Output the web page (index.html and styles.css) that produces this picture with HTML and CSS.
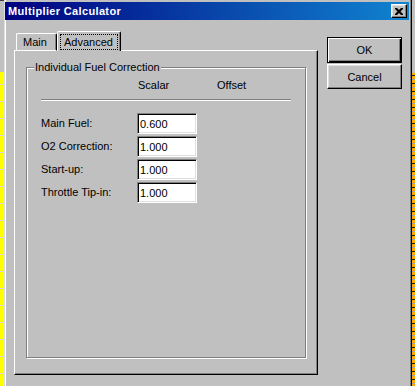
FILE: index.html
```html
<!DOCTYPE html>
<html lang="en">
<head>
  <meta charset="UTF-8" />
  <title>Multiplier Calculator</title>
  <link rel="stylesheet" href="styles.css">
</head>
<body>
  <div class="desktop">
    <div class="stripLeft"></div>

    <div class="window">
      <div class="titleBar">
        <span class="titleText">Multiplier Calculator</span>
        <button type="button" class="closeBtn" aria-label="Close">
          <svg width="8" height="7" viewBox="0 0 8 7">
            <path d="M0 0h2l2 2 2-2h2v1l-2.5 2.5 2.5 2.5v1h-2l-2-2-2 2h-2v-1l2.5-2.5-2.5-2.5z" fill="#000"/>
          </svg>
        </button>
      </div>

      <div class="windowBody">
        <div class="tabArea">
          <div class="tabStrip">
            <div class="tab">Main</div>
            <div class="tab selected"><span class="focusText">Advanced</span></div>
          </div>

          <div class="tabPanel">
            <fieldset class="groupBox">
              <legend>Individual Fuel Correction</legend>

              <div class="headerRow">
                <span class="colHead">Scalar</span>
                <span class="colHead">Offset</span>
              </div>
              <div class="separator"></div>

              <div class="rows">
                <label for="mainFuel">Main Fuel:</label>
                <input type="text" id="mainFuel" value="0.600">

                <label for="o2">O2 Correction:</label>
                <input type="text" id="o2" value="1.000">

                <label for="startup">Start-up:</label>
                <input type="text" id="startup" value="1.000">

                <label for="tipin">Throttle Tip-in:</label>
                <input type="text" id="tipin" value="1.000">
              </div>
            </fieldset>
          </div>
        </div>

        <div class="buttonColumn">
          <button type="button" class="winBtn default">OK</button>
          <button type="button" class="winBtn">Cancel</button>
        </div>
      </div>
    </div>

    <div class="stripRight"></div>
  </div>
</body>
</html>
```

FILE: styles.css
```css
* {
  box-sizing: border-box;
  margin: 0;
  padding: 0;
}

body {
  width: 415px;
  height: 386px;
  overflow: hidden;
  background: #c0c0c0;
  font-family: "Liberation Sans", Arial, sans-serif;
  font-size: 11px;
  color: #000;
}

.desktop {
  display: flex;
  height: 386px;
}

.stripLeft {
  width: 4px;
  background:
    linear-gradient(#c0c0c0 0 72px, transparent 72px),
    repeating-linear-gradient(#ffff00 0 16px, #d8d8d8 16px 17px);
  box-shadow: inset 0 20px 0 -19px #404040;
}

.stripRight {
  width: 3px;
  background:
    linear-gradient(#c0c0c0 0 73px, transparent 73px),
    repeating-linear-gradient(#ffa800 0 3px, #202020 3px 4px, #ffa800 4px 7px, #9aa0c0 7px 8px);
}

.window {
  width: 408px;
  height: 400px;
  background: #c0c0c0;
  border-left: 1px solid #dfdfdf;
  border-right: 1px solid #000;
  padding: 2px 2px 0 0;
  box-shadow: inset -1px 0 0 #808080, inset 1px 0 0 #fff;
}

.titleBar {
  height: 18px;
  display: flex;
  align-items: center;
  justify-content: space-between;
  padding: 0 2px 0 3px;
  background: linear-gradient(to right, #000080, #1084d0);
}

.titleText {
  color: #fff;
  font-weight: bold;
  font-size: 11px;
  letter-spacing: 0.35px;
}

.closeBtn {
  width: 16px;
  height: 14px;
  display: flex;
  align-items: center;
  justify-content: center;
  background: #c0c0c0;
  border: 1px solid;
  border-color: #fff #000 #000 #fff;
  box-shadow: inset -1px -1px 0 #808080, inset 1px 1px 0 #dfdfdf;
}

.windowBody {
  display: flex;
  gap: 9px;
  padding: 11px 0 0 9px;
}

.tabArea {
  width: 304px;
  display: flex;
  flex-direction: column;
}

.tabStrip {
  height: 19px;
  display: flex;
  align-items: flex-end;
  padding-left: 2px;
}

.tab {
  height: 17px;
  padding: 0 6px;
  display: flex;
  align-items: center;
  border-top: 1px solid #fff;
  border-left: 1px solid #fff;
  border-right: 1px solid #000;
  border-radius: 2px 2px 0 0;
  box-shadow: inset -1px 0 0 #808080;
  margin-bottom: -1px;
  background: #c0c0c0;
  position: relative;
  z-index: 0;
}

.tab:first-child {
  width: 41px;
  height: 18px;
  padding-bottom: 1px;
  border-bottom: 1px solid #fff;
}

.tab.selected {
  width: 64px;
  height: 20px;
  padding: 0 2px;
  z-index: 1;
}

.focusText {
  display: block;
  width: 100%;
  height: 16px;
  line-height: 14px;
  padding-left: 3px;
  border: 1px dotted #000;
}

.tabPanel {
  height: 325px;
  border-top: 1px solid #fff;
  border-left: 1px solid #fff;
  border-right: 1px solid #000;
  border-bottom: 1px solid #000;
  box-shadow: inset -1px -1px 0 #808080;
  padding: 10px 0 0 11px;
}

.groupBox {
  width: 280px;
  height: 297px;
  border: 1px solid #808080;
  box-shadow: inset 1px 1px 0 #fff, 1px 1px 0 #fff;
  padding: 0 0 0 14px;
}

.groupBox legend {
  margin-left: -7px;
  padding: 0 1px;
  line-height: 13px;
  background: #c0c0c0;
}

.headerRow {
  display: flex;
  padding: 5px 0 0 97px;
  height: 25px;
}

.colHead:first-child {
  width: 79px;
}

.separator {
  width: 250px;
  height: 2px;
  border-top: 1px solid #808080;
  border-bottom: 1px solid #fff;
  margin-bottom: 12px;
}

.rows {
  display: grid;
  grid-template-columns: 96px 60px;
  row-gap: 2px;
  align-items: center;
}

.rows label {
  line-height: 21px;
}

.rows input {
  height: 21px;
  width: 60px;
  font-family: inherit;
  font-size: 11px;
  color: #000;
  background: #fff;
  padding: 0 0 0 2px;
  border: 1px solid;
  border-color: #808080 #fff #fff #808080;
  box-shadow: inset 1px 1px 0 #000, inset -1px -1px 0 #dfdfdf;
  outline: none;
}

.buttonColumn {
  display: flex;
  flex-direction: column;
  gap: 1px;
  padding-top: 6px;
}

.winBtn {
  width: 75px;
  height: 25px;
  font-family: inherit;
  font-size: 11px;
  background: #c0c0c0;
  border: 1px solid;
  border-color: #fff #000 #000 #fff;
  box-shadow: inset -1px -1px 0 #808080, inset 1px 1px 0 #dfdfdf;
}

.winBtn.default {
  height: 26px;
  border: 1px solid #000;
  box-shadow: inset 1px 1px 0 #fff, inset -1px -1px 0 #000, inset -2px -2px 0 #808080;
}
```
